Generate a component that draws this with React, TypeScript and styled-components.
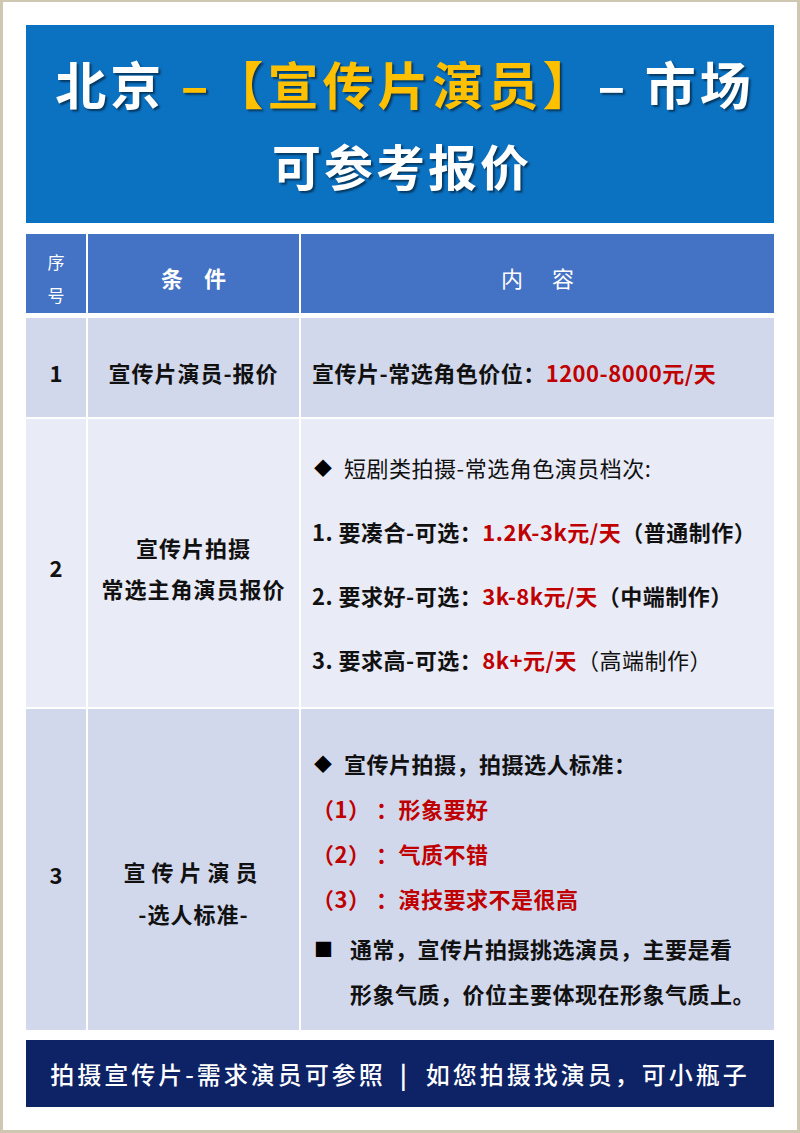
import React from "react";
import styled, { createGlobalStyle } from "styled-components";

const Global = createGlobalStyle`
  html, body { margin: 0; padding: 0; background: #ffffff; }
  body { font-family: "Noto Sans CJK SC", "Noto Sans", sans-serif; }
  * { box-sizing: border-box; }
`;

const Page = styled.div`
  width: 800px;
  height: 1133px;
  border: 3px solid #cfc7b2;
  border-top-width: 2px;
  background: #ffffff;
  padding: 23px 23px 0 23px;
  display: flex;
  flex-direction: column;
`;

const Banner = styled.header`
  height: 198px;
  background: #0b71c1;
  display: flex;
  flex-direction: column;
  align-items: center;
  justify-content: center;
  color: #ffffff;
  font-weight: 700;
  text-shadow: 2px 2px 2px rgba(0, 0, 0, 0.5);
`;

const TitleLine = styled.div<{ $size: number; $spacing: number; $shift: number }>`
  font-size: ${(p) => p.$size}px;
  letter-spacing: ${(p) => p.$spacing}px;
  padding-left: ${(p) => p.$shift}px;
  line-height: 82px;
  white-space: nowrap;
`;

const Gold = styled.span`
  color: #ffc000;
`;

const Table = styled.div`
  margin-top: 11px;
  display: flex;
  flex-direction: column;
  gap: 2px;
`;

const Row = styled.div<{ $h: number; $bg: string }>`
  display: grid;
  grid-template-columns: 60px 211px 1fr;
  column-gap: 2px;
  height: ${(p) => p.$h}px;
  & > * {
    background: ${(p) => p.$bg};
  }
`;

const HeadRow = styled(Row)`
  margin-bottom: 3px;
  color: #ffffff;
`;

const HeadCell = styled.div<{ $size: number; $spacing: number; $weight: number }>`
  display: flex;
  flex-direction: column;
  align-items: center;
  justify-content: center;
  font-size: ${(p) => p.$size}px;
  letter-spacing: ${(p) => p.$spacing}px;
  padding-left: ${(p) => p.$spacing}px;
  font-weight: ${(p) => p.$weight};
  padding-top: 8px;
  line-height: 33px;
`;

const NumCell = styled.div<{ $shift: number }>`
  display: flex;
  align-items: center;
  justify-content: center;
  font-size: 22px;
  font-weight: 700;
  color: #111;
  padding-top: ${(p) => p.$shift}px;
`;

const CondCell = styled.div<{ $shift: number; $lh: number }>`
  display: flex;
  flex-direction: column;
  align-items: center;
  justify-content: center;
  font-size: 22px;
  font-weight: 700;
  color: #111;
  letter-spacing: 1px;
  line-height: ${(p) => p.$lh}px;
  padding-top: ${(p) => p.$shift}px;
  white-space: nowrap;
`;

const WideSpan = styled.span`
  letter-spacing: 6px;
`;

const ContentCell = styled.div<{ $center?: boolean; $top: number; $gap: number }>`
  display: flex;
  flex-direction: column;
  justify-content: ${(p) => (p.$center ? "center" : "flex-start")};
  padding: ${(p) => p.$top}px 0 0 11px;
  gap: ${(p) => p.$gap}px;
  font-size: 22px;
  color: #111;
  letter-spacing: 0.5px;
`;

const Line = styled.div<{ $lh: number; $weight?: number; $red?: boolean; $mt?: number }>`
  line-height: ${(p) => p.$lh}px;
  font-weight: ${(p) => p.$weight ?? 700};
  color: ${(p) => (p.$red ? "#c00000" : "#111")};
  margin-top: ${(p) => p.$mt ?? 0}px;
  white-space: pre;
  display: flex;
  align-items: flex-start;
`;

const Red = styled.span`
  color: #c00000;
  font-weight: 700;
`;

const Thin = styled.span`
  font-weight: 400;
`;

const Bullet = styled.span<{ $w: number; $size: number }>`
  display: inline-block;
  width: ${(p) => p.$w}px;
  flex: none;
  font-size: ${(p) => p.$size}px;
  color: #000;
  padding-left: 2px;
`;

const Footer = styled.footer`
  margin-top: 10px;
  height: 67px;
  background: #0e2266;
  color: #ffffff;
  display: flex;
  align-items: center;
  justify-content: center;
  font-size: 24px;
  letter-spacing: 3px;
  font-weight: 500;
  white-space: nowrap;
`;

const Sep = styled.span`
  margin: 0 16px 0 14px;
  font-weight: 700;
`;

const LIGHT = "#d2d8ec";
const LIGHTER = "#e9ebf6";

export default function App() {
  return (
    <>
      <Global />
      <Page>
        <Banner>
          <TitleLine $size={51} $spacing={4} $shift={10}>
            北京 <Gold>–【宣传片演员】</Gold>– 市场
          </TitleLine>
          <TitleLine $size={49} $spacing={3} $shift={4}>
            可参考报价
          </TitleLine>
        </Banner>

        <Table>
          <HeadRow $h={79} $bg="#4472c4">
            <HeadCell $size={17} $spacing={0} $weight={400}>
              <span>序</span>
              <span>号</span>
            </HeadCell>
            <HeadCell $size={22} $spacing={8} $weight={700}>
              条 件
            </HeadCell>
            <HeadCell $size={22} $spacing={12} $weight={400}>
              内 容
            </HeadCell>
          </HeadRow>

          <Row $h={99} $bg={LIGHT}>
            <NumCell $shift={8}>1</NumCell>
            <CondCell $shift={8} $lh={34}>
              宣传片演员-报价
            </CondCell>
            <ContentCell $center $top={8} $gap={0}>
              <Line $lh={34}>
                宣传片-常选角色价位：<Red>1200-8000元/天</Red>
              </Line>
            </ContentCell>
          </Row>

          <Row $h={288} $bg={LIGHTER}>
            <NumCell $shift={8}>2</NumCell>
            <CondCell $shift={9} $lh={41}>
              <span>宣传片拍摄</span>
              <span>常选主角演员报价</span>
            </CondCell>
            <ContentCell $center $top={0} $gap={30}>
              <Line $lh={34} $weight={400}>
                <Bullet $w={32} $size={18}>◆</Bullet>
                短剧类拍摄-常选角色演员档次:
              </Line>
              <Line $lh={34}>
                1. 要凑合-可选：<Red>1.2K-3k元/天</Red>（普通制作）
              </Line>
              <Line $lh={34}>
                2. 要求好-可选：<Red>3k-8k元/天</Red>（中端制作）
              </Line>
              <Line $lh={34}>
                3. 要求高-可选：<Red>8k+元/天</Red> <Thin>（高端制作）</Thin>
              </Line>
            </ContentCell>
          </Row>

          <Row $h={321} $bg={LIGHT}>
            <NumCell $shift={8}>3</NumCell>
            <CondCell $shift={44} $lh={42}>
              <WideSpan>宣传片演员</WideSpan>
              <span>-选人标准-</span>
            </CondCell>
            <ContentCell $top={32} $gap={0}>
              <Line $lh={45}>
                <Bullet $w={32} $size={18}>◆</Bullet>
                宣传片拍摄，拍摄选人标准：
              </Line>
              <Line $lh={45} $red>{"（1） ：形象要好"}</Line>
              <Line $lh={45} $red>{"（2） ：气质不错"}</Line>
              <Line $lh={45} $red>{"（3） ：演技要求不是很高"}</Line>
              <Line $lh={45} $mt={5}>
                <Bullet $w={38} $size={19}>■</Bullet>
                <span>
                  通常，宣传片拍摄挑选演员，主要是看
                  <br />
                  形象气质，价位主要体现在形象气质上。
                </span>
              </Line>
            </ContentCell>
          </Row>
        </Table>

        <Footer>
          拍摄宣传片-需求演员可参照<Sep>|</Sep>如您拍摄找演员，可小瓶子
        </Footer>
      </Page>
    </>
  );
}
